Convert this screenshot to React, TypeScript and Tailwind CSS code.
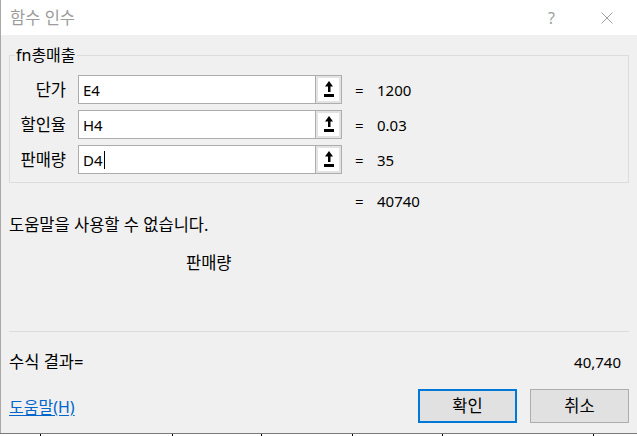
import React from "react";

const FONT = {
  fontFamily: "'Noto Sans','Noto Sans CJK KR',sans-serif",
};

function RefButton() {
  return (
    <div className="w-[27px] h-[29px] border border-[#adadad] bg-[#e3e3e3] p-[2px] flex">
      <div className="flex-1 bg-white flex items-center justify-center">
        <svg width="10" height="17" viewBox="0 0 10 17">
          <polygon points="5,0 1,5.5 9,5.5" fill="#000" />
          <rect x="4" y="5" width="2.5" height="6" fill="#000" />
          <rect x="0" y="13" width="10" height="3" fill="#000" />
        </svg>
      </div>
    </div>
  );
}

function ArgRow({ label, value, result, caret }: { label: string; value: string; result: string; caret?: boolean }) {
  return (
    <div className="flex items-center h-[29px]">
      <div className="w-[56px] text-right text-[16.5px] leading-[20px] text-black">{label}</div>
      <div className="ml-[12px] w-[237px] h-[29px] border border-[#acacac] border-r-0 bg-white flex items-center pl-[4px] text-[15px] leading-[20px] text-black">
        {value}
        {caret && <span className="inline-block w-[1px] h-[18px] bg-black ml-[1px]" />}
      </div>
      <RefButton />
      <div className="ml-[13px] w-[22px] text-[15px] leading-[20px] text-black">=</div>
      <div className="text-[15px] leading-[20px] text-black">{result}</div>
    </div>
  );
}

export default function App() {
  return (
    <div style={FONT} className="w-[637px] h-[436px] bg-white overflow-hidden flex flex-col">
      <div className="h-[433px] bg-[#f0f0f0] border-l border-[#a8a8a8] flex flex-col">
        {/* title bar */}
        <div className="h-[35px] bg-white flex items-center pl-[9px] pr-[24px]">
          <div className="text-[16.5px] leading-[20px] text-[#9c9c9c]">함수 인수</div>
          <div className="ml-auto text-[16px] leading-[20px] text-[#a0a0a0] mr-[46px]">?</div>
          <svg width="12" height="12" viewBox="0 0 12 12">
            <line x1="0.5" y1="0.5" x2="11.5" y2="11.5" stroke="#a0a0a0" strokeWidth="1" />
            <line x1="11.5" y1="0.5" x2="0.5" y2="11.5" stroke="#a0a0a0" strokeWidth="1" />
          </svg>
        </div>

        <div className="pl-[8px] flex flex-col">
          {/* group box */}
          <div className="relative mt-[20px] w-[620px] h-[128px] border border-[#dcdcdc] pt-[19px] flex flex-col gap-[6px]">
            <div className="absolute -top-[11px] left-[5px] bg-[#f0f0f0] px-[1px] text-[16px] leading-[20px] text-black">
              fn총매출
            </div>
            <ArgRow label="단가" value="E4" result="1200" />
            <ArgRow label="할인율" value="H4" result="0.03" />
            <ArgRow label="판매량" value="D4" result="35" caret />
          </div>

          <div className="mt-[8px] h-[20px] flex pl-[346px] text-[15px] leading-[20px] text-black">
            <div className="w-[22px]">=</div>
            <div>40740</div>
          </div>

          <div className="mt-[4px] h-[20px] text-[16.5px] leading-[20px] text-black">도움말을 사용할 수 없습니다.</div>

          <div className="mt-[18px] h-[20px] pl-[177px] text-[16.5px] leading-[20px] text-black">판매량</div>

          <div className="mt-[58px] w-[620px] h-[1px] bg-[#dcdcdc]" />

          <div className="mt-[20px] h-[20px] w-[612px] flex justify-between text-[15px] leading-[20px] text-black">
            <div className="text-[16.5px]">수식 결과=</div>
            <div>40,740</div>
          </div>

          <div className="mt-[17px] h-[34px] w-[620px] flex items-center">
            <a className="text-[16px] leading-[20px] text-[#0066cc] underline underline-offset-2 mt-[2px]">도움말(H)</a>
            <button className="ml-auto w-[99px] h-[34px] border-2 border-[#0078d7] bg-[#e1e1e1] text-[16.5px] leading-[20px] text-black">
              확인
            </button>
            <button className="ml-[13px] w-[99px] h-[34px] border border-[#adadad] bg-[#e1e1e1] text-[16.5px] leading-[20px] text-black">
              취소
            </button>
          </div>
        </div>
      </div>
      <div className="relative h-[3px] border-t border-[#7a7a7a] bg-white">
        <div className="absolute left-[40px] top-0 w-[1px] h-[2px] bg-black" />
        <div className="absolute left-[172px] top-0 w-[1px] h-[2px] bg-black" />
        <div className="absolute left-[261px] top-0 w-[1px] h-[2px] bg-black" />
        <div className="absolute left-[352px] top-0 w-[1px] h-[2px] bg-black" />
        <div className="absolute left-[442px] top-0 w-[1px] h-[2px] bg-black" />
        <div className="absolute left-[593px] top-0 w-[1px] h-[2px] bg-black" />
      </div>
    </div>
  );
}
